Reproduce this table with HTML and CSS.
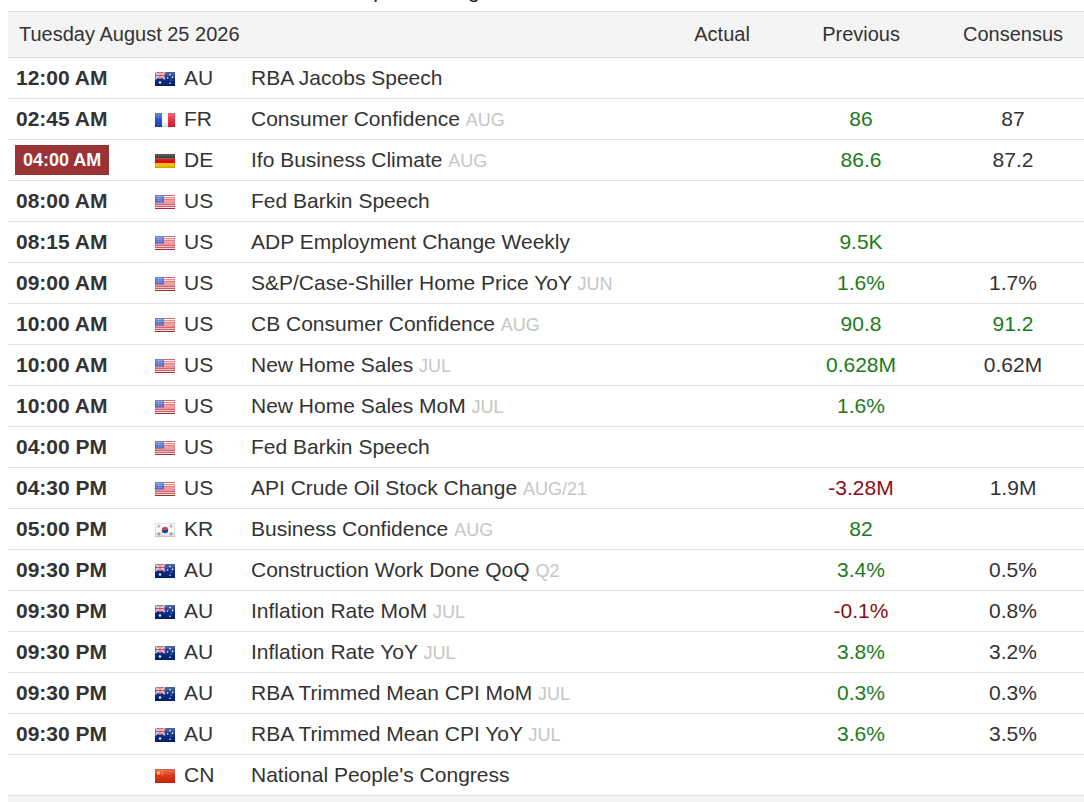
FILE: index.html
```html
<!DOCTYPE html>
<html lang="en">
<head>
<meta charset="utf-8">
<title>Economic Calendar</title>
<link rel="stylesheet" href="styles.css">
</head>
<body>
<div class="intro"><span class="intro-text">Impact Rating</span></div>
<table class="calendar">
  <colgroup>
    <col class="c-time"><col class="c-country"><col class="c-event"><col class="c-actual"><col class="c-prev"><col class="c-cons">
  </colgroup>
  <thead>
    <tr class="day-head">
      <th colspan="3" class="date">Tuesday August 25 2026</th>
      <th class="num">Actual</th>
      <th class="num">Previous</th>
      <th class="num">Consensus</th>
    </tr>
  </thead>
  <tbody>
    <tr>
      <td class="time">12:00 AM</td>
      <td class="country"><span class="flag"><svg viewBox="0 0 20 14" width="20" height="14"><rect width="20" height="14" fill="#00247d"/><path d="M0 0L10 7M10 0L0 7" stroke="#fff" stroke-width="1.6"/><path d="M0 0L10 7M10 0L0 7" stroke="#cf142b" stroke-width="0.6"/><path d="M5 0V7M0 3.5H10" stroke="#fff" stroke-width="2.2"/><path d="M5 0V7M0 3.5H10" stroke="#cf142b" stroke-width="1.2"/><circle cx="5" cy="10.5" r="1.2" fill="#fff"/><circle cx="15" cy="2.6" r="0.8" fill="#fff"/><circle cx="12.6" cy="6" r="0.8" fill="#fff"/><circle cx="17.6" cy="5.4" r="0.8" fill="#fff"/><circle cx="16.2" cy="8" r="0.5" fill="#fff"/><circle cx="15" cy="11.2" r="0.8" fill="#fff"/></svg></span>AU</td>
      <td class="event">RBA Jacobs Speech</td>
      <td class="num"></td><td class="num"></td><td class="num"></td>
    </tr>
    <tr>
      <td class="time">02:45 AM</td>
      <td class="country"><span class="flag"><svg viewBox="0 0 20 14" width="20" height="14"><rect width="7" height="14" fill="#1d4fc4"/><rect x="7" width="6" height="14" fill="#fff"/><rect x="13" width="7" height="14" fill="#ee2436"/></svg></span>FR</td>
      <td class="event">Consumer Confidence <span class="ref">AUG</span></td>
      <td class="num"></td><td class="num up">86</td><td class="num">87</td>
    </tr>
    <tr>
      <td class="time"><span class="now">04:00 AM</span></td>
      <td class="country"><span class="flag"><svg viewBox="0 0 20 14" width="20" height="14"><rect width="20" height="4.7" fill="#111"/><rect y="4.7" width="20" height="4.7" fill="#dd0000"/><rect y="9.4" width="20" height="4.6" fill="#ffce00"/></svg></span>DE</td>
      <td class="event">Ifo Business Climate <span class="ref">AUG</span></td>
      <td class="num"></td><td class="num up">86.6</td><td class="num">87.2</td>
    </tr>
    <tr>
      <td class="time">08:00 AM</td>
      <td class="country"><span class="flag us"><svg viewBox="0 0 20 14" width="20" height="14"><rect width="20" height="14" fill="#fff"/><path d="M0 0.54H20M0 2.7H20M0 4.85H20M0 7H20M0 9.15H20M0 11.3H20M0 13.46H20" stroke="#d9303a" stroke-width="1.08"/><rect width="9" height="7.5" fill="#3b5cc4"/><path d="M1.5 1.5h6M1.5 3.7h6M1.5 5.9h6" stroke="#c8d2f2" stroke-width="0.7" stroke-dasharray="0.8 0.7"/></svg></span>US</td>
      <td class="event">Fed Barkin Speech</td>
      <td class="num"></td><td class="num"></td><td class="num"></td>
    </tr>
    <tr>
      <td class="time">08:15 AM</td>
      <td class="country"><span class="flag us"><svg viewBox="0 0 20 14" width="20" height="14"><rect width="20" height="14" fill="#fff"/><path d="M0 0.54H20M0 2.7H20M0 4.85H20M0 7H20M0 9.15H20M0 11.3H20M0 13.46H20" stroke="#d9303a" stroke-width="1.08"/><rect width="9" height="7.5" fill="#3b5cc4"/><path d="M1.5 1.5h6M1.5 3.7h6M1.5 5.9h6" stroke="#c8d2f2" stroke-width="0.7" stroke-dasharray="0.8 0.7"/></svg></span>US</td>
      <td class="event">ADP Employment Change Weekly</td>
      <td class="num"></td><td class="num up">9.5K</td><td class="num"></td>
    </tr>
    <tr>
      <td class="time">09:00 AM</td>
      <td class="country"><span class="flag us"><svg viewBox="0 0 20 14" width="20" height="14"><rect width="20" height="14" fill="#fff"/><path d="M0 0.54H20M0 2.7H20M0 4.85H20M0 7H20M0 9.15H20M0 11.3H20M0 13.46H20" stroke="#d9303a" stroke-width="1.08"/><rect width="9" height="7.5" fill="#3b5cc4"/><path d="M1.5 1.5h6M1.5 3.7h6M1.5 5.9h6" stroke="#c8d2f2" stroke-width="0.7" stroke-dasharray="0.8 0.7"/></svg></span>US</td>
      <td class="event">S&amp;P/Case-Shiller Home Price YoY <span class="ref">JUN</span></td>
      <td class="num"></td><td class="num up">1.6%</td><td class="num">1.7%</td>
    </tr>
    <tr>
      <td class="time">10:00 AM</td>
      <td class="country"><span class="flag us"><svg viewBox="0 0 20 14" width="20" height="14"><rect width="20" height="14" fill="#fff"/><path d="M0 0.54H20M0 2.7H20M0 4.85H20M0 7H20M0 9.15H20M0 11.3H20M0 13.46H20" stroke="#d9303a" stroke-width="1.08"/><rect width="9" height="7.5" fill="#3b5cc4"/><path d="M1.5 1.5h6M1.5 3.7h6M1.5 5.9h6" stroke="#c8d2f2" stroke-width="0.7" stroke-dasharray="0.8 0.7"/></svg></span>US</td>
      <td class="event">CB Consumer Confidence <span class="ref">AUG</span></td>
      <td class="num"></td><td class="num up">90.8</td><td class="num up">91.2</td>
    </tr>
    <tr>
      <td class="time">10:00 AM</td>
      <td class="country"><span class="flag us"><svg viewBox="0 0 20 14" width="20" height="14"><rect width="20" height="14" fill="#fff"/><path d="M0 0.54H20M0 2.7H20M0 4.85H20M0 7H20M0 9.15H20M0 11.3H20M0 13.46H20" stroke="#d9303a" stroke-width="1.08"/><rect width="9" height="7.5" fill="#3b5cc4"/><path d="M1.5 1.5h6M1.5 3.7h6M1.5 5.9h6" stroke="#c8d2f2" stroke-width="0.7" stroke-dasharray="0.8 0.7"/></svg></span>US</td>
      <td class="event">New Home Sales <span class="ref">JUL</span></td>
      <td class="num"></td><td class="num up">0.628M</td><td class="num">0.62M</td>
    </tr>
    <tr>
      <td class="time">10:00 AM</td>
      <td class="country"><span class="flag us"><svg viewBox="0 0 20 14" width="20" height="14"><rect width="20" height="14" fill="#fff"/><path d="M0 0.54H20M0 2.7H20M0 4.85H20M0 7H20M0 9.15H20M0 11.3H20M0 13.46H20" stroke="#d9303a" stroke-width="1.08"/><rect width="9" height="7.5" fill="#3b5cc4"/><path d="M1.5 1.5h6M1.5 3.7h6M1.5 5.9h6" stroke="#c8d2f2" stroke-width="0.7" stroke-dasharray="0.8 0.7"/></svg></span>US</td>
      <td class="event">New Home Sales MoM <span class="ref">JUL</span></td>
      <td class="num"></td><td class="num up">1.6%</td><td class="num"></td>
    </tr>
    <tr>
      <td class="time">04:00 PM</td>
      <td class="country"><span class="flag us"><svg viewBox="0 0 20 14" width="20" height="14"><rect width="20" height="14" fill="#fff"/><path d="M0 0.54H20M0 2.7H20M0 4.85H20M0 7H20M0 9.15H20M0 11.3H20M0 13.46H20" stroke="#d9303a" stroke-width="1.08"/><rect width="9" height="7.5" fill="#3b5cc4"/><path d="M1.5 1.5h6M1.5 3.7h6M1.5 5.9h6" stroke="#c8d2f2" stroke-width="0.7" stroke-dasharray="0.8 0.7"/></svg></span>US</td>
      <td class="event">Fed Barkin Speech</td>
      <td class="num"></td><td class="num"></td><td class="num"></td>
    </tr>
    <tr>
      <td class="time">04:30 PM</td>
      <td class="country"><span class="flag us"><svg viewBox="0 0 20 14" width="20" height="14"><rect width="20" height="14" fill="#fff"/><path d="M0 0.54H20M0 2.7H20M0 4.85H20M0 7H20M0 9.15H20M0 11.3H20M0 13.46H20" stroke="#d9303a" stroke-width="1.08"/><rect width="9" height="7.5" fill="#3b5cc4"/><path d="M1.5 1.5h6M1.5 3.7h6M1.5 5.9h6" stroke="#c8d2f2" stroke-width="0.7" stroke-dasharray="0.8 0.7"/></svg></span>US</td>
      <td class="event">API Crude Oil Stock Change <span class="ref">AUG/21</span></td>
      <td class="num"></td><td class="num down">-3.28M</td><td class="num">1.9M</td>
    </tr>
    <tr>
      <td class="time">05:00 PM</td>
      <td class="country"><span class="flag"><svg viewBox="0 0 20 14" width="20" height="14"><rect width="20" height="14" fill="#fafafa"/><path d="M6.8 7a3.2 3.2 0 0 1 6.4 0z" fill="#cd2e3a"/><path d="M6.8 7a3.2 3.2 0 0 0 6.4 0z" fill="#0047a0"/><path d="M2.2 3.6l2-2.2M2.9 4.2l2-2.2M3.6 4.8l2-2.2M14.4 2.6l2 2.2M15.1 2l2 2.2M15.8 1.4l2 2.2M2.2 10.4l2 2.2M2.9 9.8l2 2.2M3.6 9.2l2 2.2M14.4 11.4l2-2.2M15.1 12l2-2.2M15.8 12.6l2-2.2" stroke="#333" stroke-width="0.5"/></svg></span>KR</td>
      <td class="event">Business Confidence <span class="ref">AUG</span></td>
      <td class="num"></td><td class="num up">82</td><td class="num"></td>
    </tr>
    <tr>
      <td class="time">09:30 PM</td>
      <td class="country"><span class="flag"><svg viewBox="0 0 20 14" width="20" height="14"><rect width="20" height="14" fill="#00247d"/><path d="M0 0L10 7M10 0L0 7" stroke="#fff" stroke-width="1.6"/><path d="M0 0L10 7M10 0L0 7" stroke="#cf142b" stroke-width="0.6"/><path d="M5 0V7M0 3.5H10" stroke="#fff" stroke-width="2.2"/><path d="M5 0V7M0 3.5H10" stroke="#cf142b" stroke-width="1.2"/><circle cx="5" cy="10.5" r="1.2" fill="#fff"/><circle cx="15" cy="2.6" r="0.8" fill="#fff"/><circle cx="12.6" cy="6" r="0.8" fill="#fff"/><circle cx="17.6" cy="5.4" r="0.8" fill="#fff"/><circle cx="16.2" cy="8" r="0.5" fill="#fff"/><circle cx="15" cy="11.2" r="0.8" fill="#fff"/></svg></span>AU</td>
      <td class="event">Construction Work Done QoQ <span class="ref">Q2</span></td>
      <td class="num"></td><td class="num up">3.4%</td><td class="num">0.5%</td>
    </tr>
    <tr>
      <td class="time">09:30 PM</td>
      <td class="country"><span class="flag"><svg viewBox="0 0 20 14" width="20" height="14"><rect width="20" height="14" fill="#00247d"/><path d="M0 0L10 7M10 0L0 7" stroke="#fff" stroke-width="1.6"/><path d="M0 0L10 7M10 0L0 7" stroke="#cf142b" stroke-width="0.6"/><path d="M5 0V7M0 3.5H10" stroke="#fff" stroke-width="2.2"/><path d="M5 0V7M0 3.5H10" stroke="#cf142b" stroke-width="1.2"/><circle cx="5" cy="10.5" r="1.2" fill="#fff"/><circle cx="15" cy="2.6" r="0.8" fill="#fff"/><circle cx="12.6" cy="6" r="0.8" fill="#fff"/><circle cx="17.6" cy="5.4" r="0.8" fill="#fff"/><circle cx="16.2" cy="8" r="0.5" fill="#fff"/><circle cx="15" cy="11.2" r="0.8" fill="#fff"/></svg></span>AU</td>
      <td class="event">Inflation Rate MoM <span class="ref">JUL</span></td>
      <td class="num"></td><td class="num down">-0.1%</td><td class="num">0.8%</td>
    </tr>
    <tr>
      <td class="time">09:30 PM</td>
      <td class="country"><span class="flag"><svg viewBox="0 0 20 14" width="20" height="14"><rect width="20" height="14" fill="#00247d"/><path d="M0 0L10 7M10 0L0 7" stroke="#fff" stroke-width="1.6"/><path d="M0 0L10 7M10 0L0 7" stroke="#cf142b" stroke-width="0.6"/><path d="M5 0V7M0 3.5H10" stroke="#fff" stroke-width="2.2"/><path d="M5 0V7M0 3.5H10" stroke="#cf142b" stroke-width="1.2"/><circle cx="5" cy="10.5" r="1.2" fill="#fff"/><circle cx="15" cy="2.6" r="0.8" fill="#fff"/><circle cx="12.6" cy="6" r="0.8" fill="#fff"/><circle cx="17.6" cy="5.4" r="0.8" fill="#fff"/><circle cx="16.2" cy="8" r="0.5" fill="#fff"/><circle cx="15" cy="11.2" r="0.8" fill="#fff"/></svg></span>AU</td>
      <td class="event">Inflation Rate YoY <span class="ref">JUL</span></td>
      <td class="num"></td><td class="num up">3.8%</td><td class="num">3.2%</td>
    </tr>
    <tr>
      <td class="time">09:30 PM</td>
      <td class="country"><span class="flag"><svg viewBox="0 0 20 14" width="20" height="14"><rect width="20" height="14" fill="#00247d"/><path d="M0 0L10 7M10 0L0 7" stroke="#fff" stroke-width="1.6"/><path d="M0 0L10 7M10 0L0 7" stroke="#cf142b" stroke-width="0.6"/><path d="M5 0V7M0 3.5H10" stroke="#fff" stroke-width="2.2"/><path d="M5 0V7M0 3.5H10" stroke="#cf142b" stroke-width="1.2"/><circle cx="5" cy="10.5" r="1.2" fill="#fff"/><circle cx="15" cy="2.6" r="0.8" fill="#fff"/><circle cx="12.6" cy="6" r="0.8" fill="#fff"/><circle cx="17.6" cy="5.4" r="0.8" fill="#fff"/><circle cx="16.2" cy="8" r="0.5" fill="#fff"/><circle cx="15" cy="11.2" r="0.8" fill="#fff"/></svg></span>AU</td>
      <td class="event">RBA Trimmed Mean CPI MoM <span class="ref">JUL</span></td>
      <td class="num"></td><td class="num up">0.3%</td><td class="num">0.3%</td>
    </tr>
    <tr>
      <td class="time">09:30 PM</td>
      <td class="country"><span class="flag"><svg viewBox="0 0 20 14" width="20" height="14"><rect width="20" height="14" fill="#00247d"/><path d="M0 0L10 7M10 0L0 7" stroke="#fff" stroke-width="1.6"/><path d="M0 0L10 7M10 0L0 7" stroke="#cf142b" stroke-width="0.6"/><path d="M5 0V7M0 3.5H10" stroke="#fff" stroke-width="2.2"/><path d="M5 0V7M0 3.5H10" stroke="#cf142b" stroke-width="1.2"/><circle cx="5" cy="10.5" r="1.2" fill="#fff"/><circle cx="15" cy="2.6" r="0.8" fill="#fff"/><circle cx="12.6" cy="6" r="0.8" fill="#fff"/><circle cx="17.6" cy="5.4" r="0.8" fill="#fff"/><circle cx="16.2" cy="8" r="0.5" fill="#fff"/><circle cx="15" cy="11.2" r="0.8" fill="#fff"/></svg></span>AU</td>
      <td class="event">RBA Trimmed Mean CPI YoY <span class="ref">JUL</span></td>
      <td class="num"></td><td class="num up">3.6%</td><td class="num">3.5%</td>
    </tr>
    <tr>
      <td class="time"></td>
      <td class="country"><span class="flag"><svg viewBox="0 0 20 14" width="20" height="14"><rect width="20" height="14" fill="#de2910"/><polygon points="3.5,1.2 4.1,3 6,3 4.5,4.1 5.1,5.9 3.5,4.8 1.9,5.9 2.5,4.1 1,3 2.9,3" fill="#ffde00"/><circle cx="7" cy="1.4" r="0.5" fill="#ffde00"/><circle cx="8" cy="2.8" r="0.5" fill="#ffde00"/><circle cx="8" cy="4.4" r="0.5" fill="#ffde00"/><circle cx="7" cy="5.8" r="0.5" fill="#ffde00"/></svg></span>CN</td>
      <td class="event">National People's Congress</td>
      <td class="num"></td><td class="num"></td><td class="num"></td>
    </tr>
  </tbody>
  <thead>
    <tr class="day-head">
      <th colspan="3" class="date">Wednesday August 26 2026</th>
      <th class="num">Actual</th>
      <th class="num">Previous</th>
      <th class="num">Consensus</th>
    </tr>
  </thead>
</table>
</body>
</html>
```

FILE: styles.css
```css
html, body {
  overflow: hidden;
}
body {
  margin: 0 0 0 8px;
  background: #fff;
  color: #333;
  font-family: "Liberation Sans", Arial, Helvetica, sans-serif;
}
.intro {
  margin-top: -21px;
  height: 24px;
  line-height: 24px;
  font-size: 21px;
  color: #222;
  padding-left: 342px;
  white-space: nowrap;
}
.calendar {
  margin-top: 8px;
  width: 1088px;
  table-layout: fixed;
  border-collapse: collapse;
}
.c-time { width: 139px; }
.c-country { width: 96px; }
.c-event { width: 409px; }
.c-actual { width: 140px; }
.c-prev { width: 138px; }
.c-cons { width: 166px; }

.day-head th {
  background: #f4f4f4;
  border-top: 1px solid #dcdcdf;
  border-bottom: 1px solid #dcdcdf;
  height: 45px;
  padding: 0;
  font-weight: normal;
  font-size: 20px;
  color: #333;
  vertical-align: middle;
}
.day-head th.date {
  text-align: left;
  padding-left: 11px;
}
.calendar td {
  height: 40px;
  padding: 0 8px;
  border-bottom: 1px solid #e1e1e5;
  font-size: 21px;
  vertical-align: middle;
  white-space: nowrap;
  overflow: hidden;
}
.calendar td.time {
  font-weight: bold;
  padding-left: 8px;
}
.now {
  display: inline-block;
  background: #9b3234;
  color: #fff;
  font-size: 18px;
  line-height: 22px;
  padding: 4px 8px;
  margin-left: -1px;
}
.flag {
  position: relative;
  display: inline-block;
  width: 20px;
  height: 14px;
  margin-right: 9px;
  vertical-align: -1px;
}
.flag svg {
  display: block;
}
.flag::after {
  content: "";
  position: absolute;
  inset: 0;
  background: linear-gradient(rgba(255,255,255,0.35), rgba(255,255,255,0.05) 50%, rgba(0,0,0,0.12));
  box-shadow: inset 0 0 0 0.5px rgba(0,0,0,0.18);
}
.ref {
  font-size: 18px;
  color: #c6c6c6;
}
.calendar .num {
  text-align: center;
}
.up { color: #1b7b1b; }
.down { color: #8e0d0d; }
```
